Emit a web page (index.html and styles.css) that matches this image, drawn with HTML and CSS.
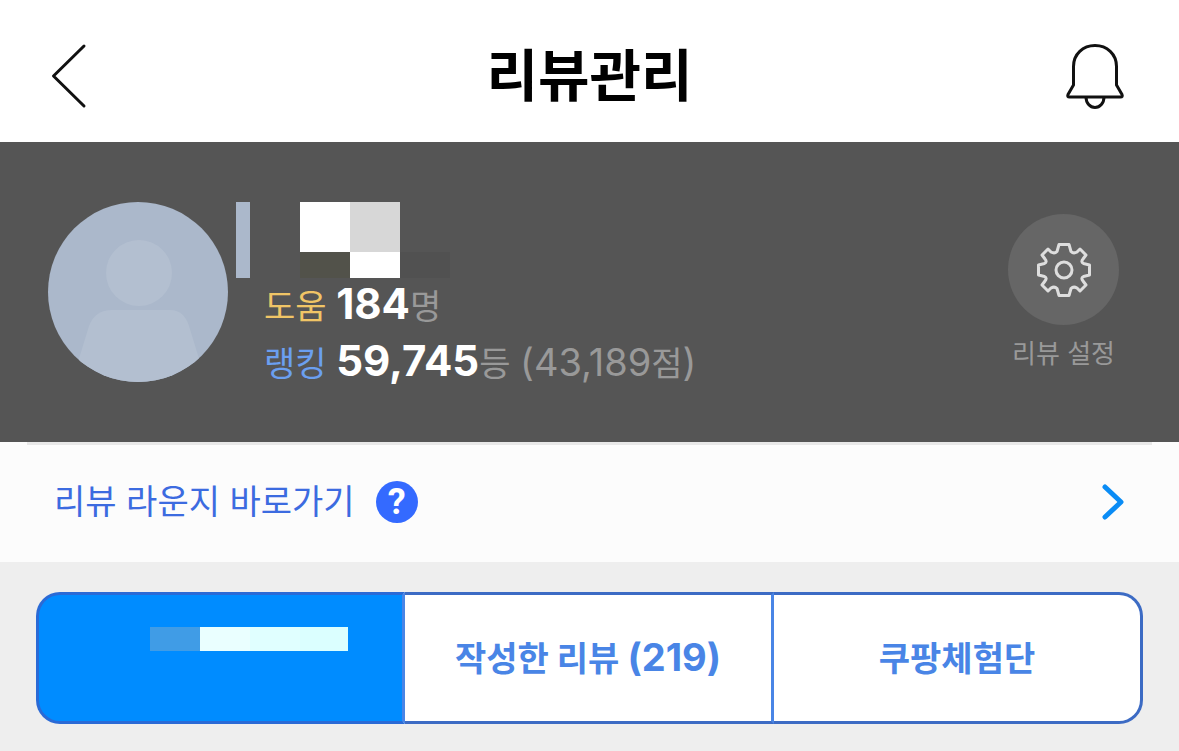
FILE: index.html
```html
<!DOCTYPE html>
<html lang="ko">
<head>
  <meta charset="UTF-8">
  <title>리뷰관리</title>
  <meta name="viewport" content="width=device-width, initial-scale=1.0">
  <link rel="stylesheet" href="styles.css">
</head>

<body>
  <!-- Top bar -->
  <header class="topbar">
    <a href="#back" class="icon-link" aria-label="뒤로">
      <svg width="64" height="68" viewBox="2 0 64 68" fill="none" stroke="#111" stroke-width="3" stroke-linecap="round" stroke-linejoin="round">
        <path d="M36 4 L5.500 34 L36 64"/>
      </svg>
    </a>
    <h1>리뷰관리</h1>
    <a href="#alerts" class="icon-link" aria-label="알림">
      <svg width="64" height="68" viewBox="0 0 64 68" fill="none" stroke="#111" stroke-width="3" stroke-linejoin="round">
        <path d="M8.500 43 V24.500 C8.500 12 18 3.500 30 3.500 S51.500 12 51.500 24.500 V43 L57 52.500 Q58 55 55.500 55 H4.500 Q2 55 3 52.500 Z"/>
        <path d="M21 55 C21 61 25 65.500 30 65.500 S39 61 39 55"/>
      </svg>
    </a>
  </header>

  <!-- Profile -->
  <section class="profile">
    <svg class="avatar" width="180" height="180" viewBox="0 0 180 180">
      <clipPath id="round"><circle cx="90" cy="90" r="90"/></clipPath>
      <g clip-path="url(#round)">
        <rect width="180" height="180" fill="#abb8cb"/>
        <circle cx="91" cy="71" r="33" fill="#b3bfd0"/>
        <path d="M30 160 L41 124 Q47 108 64 108 H122 Q136 108 141 124 L152 160 V180 H30 Z" fill="#b3bfd0"/>
      </g>
    </svg>
    <div class="info">
      <svg class="name" width="214" height="76" viewBox="0 0 214 76" shape-rendering="crispEdges">
        <rect width="14" height="76" fill="#abb8cb"/>
        <rect x="64" width="50" height="50" fill="#fff"/>
        <rect x="114" width="50" height="50" fill="#d7d7d7"/>
        <rect x="64" y="50" width="50" height="26" fill="#52524a"/>
        <rect x="114" y="50" width="50" height="26" fill="#fff"/>
        <rect x="164" y="50" width="50" height="26" fill="#515151"/>
      </svg>
      <p class="stat"><span class="help">도움</span> <strong>184</strong><span>명</span></p>
      <p class="stat"><span class="rank">랭킹</span> <strong>59,745</strong><span>등 <span class="points">(43,189</span>점<span class="points">)</span></span></p>
    </div>
    <a href="#settings" class="settings">
      <span class="gear">
        <svg width="56" height="56" viewBox="-28 -28 56 56" fill="none" stroke="#dedede" stroke-width="3" stroke-linejoin="round">
          <path d="M-5 -25.500 H5 L7 -18.500 Q9.500 -16 13 -18 L16 -21 L22 -15 L19 -11 Q16.500 -8 19.500 -6.500 L25.500 -5 V5 L19.500 6.500 Q16.500 8 19 11 L22 15 L16 21 L13 18 Q9.500 16 7 18.500 L5 25.500 H-5 L-7 18.500 Q-9.500 16 -13 18 L-16 21 L-22 15 L-19 11 Q-16.500 8 -19.500 6.500 L-25.500 5 V-5 L-19.500 -6.500 Q-16.500 -8 -19 -11 L-22 -15 L-16 -21 L-13 -18 Q-9.500 -16 -7 -18.500 Z"/>
          <circle r="8"/>
        </svg>
      </span>
      리뷰 설정
    </a>
  </section>

  <!-- Review lounge link -->
  <section class="lounge">
    <hr>
    <div class="lounge-row">
      <a href="#lounge">리뷰 라운지 바로가기</a>
      <button type="button" class="question" aria-label="도움말">?</button>
      <a href="#lounge" class="more" aria-label="바로가기">
        <svg width="24" height="38" viewBox="0 0 24 38" fill="none" stroke="#0a8cf5" stroke-width="5" stroke-linecap="round" stroke-linejoin="round">
          <path d="M4 4 L20 19 L4 34"/>
        </svg>
      </a>
    </div>
  </section>

  <!-- Tabs -->
  <nav class="tabs">
    <button type="button" class="tab active" aria-label="리뷰 작성">
      <svg width="198" height="24" viewBox="0 0 198 24" shape-rendering="crispEdges">
        <rect width="50" height="24" fill="#409ce6"/>
        <rect x="50" width="50" height="24" fill="#eaffff"/>
        <rect x="100" width="50" height="24" fill="#e0ffff"/>
        <rect x="150" width="48" height="24" fill="#dbffff"/>
      </svg>
    </button>
    <button type="button" class="tab">작성한 리뷰 <span class="count">(219)</span></button>
    <button type="button" class="tab">쿠팡체험단</button>
  </nav>
</body>
</html>
```
FILE: styles.css
```css
* {
  box-sizing: border-box;
}

body {
  margin: 0;
  min-height: 100vh;
  background: #eee;
  font-family: Inter, "Noto Sans CJK KR", sans-serif;
  font-size: 34px;
}

a {
  color: inherit;
  text-decoration: none;
}

button {
  font-family: inherit;
  padding: 0;
}

svg {
  display: block;
}

/* Top bar */
.topbar {
  display: flex;
  align-items: center;
  justify-content: space-between;
  height: 142px;
  padding: 10px 50px 0;
  background: #fff;
}

h1 {
  margin: 0;
  color: #000;
  font-size: 56px;
  font-weight: 700;
  line-height: 80px;
}

/* Profile */
.profile {
  display: flex;
  align-items: flex-start;
  height: 300px;
  padding: 60px 60px 0 48px;
  background: #555;
}

.info {
  flex: 1;
  margin-left: 8px;
}

.stat {
  margin: 0;
  padding-left: 28px;
  color: #999;
  font-weight: 400;
  line-height: 57px;
}

.stat strong {
  color: #fff;
  font-size: 42px;
  font-weight: 700;
  line-height: 1;
}

.help {
  color: #f0c566;
}

.rank {
  color: #6b9ff0;
}

.points {
  font-size: 38px;
  line-height: 1;
}

.settings {
  display: flex;
  flex-direction: column;
  align-items: center;
  gap: 9px;
  margin-top: 12px;
  color: #999;
  font-size: 26px;
  font-weight: 400;
  line-height: 40px;
}

.gear {
  display: flex;
  align-items: center;
  justify-content: center;
  width: 111px;
  height: 111px;
  border-radius: 50%;
  background: #666;
}

/* Review lounge */
.lounge {
  padding-bottom: 4px;
  background: #fcfcfc;
}

.lounge hr {
  height: 3px;
  margin: 0 27px;
  border: 0;
  background: #e8e8e8;
}

.lounge-row {
  display: flex;
  align-items: center;
  height: 113px;
  padding: 0 54px;
  color: #3c6be0;
  font-weight: 400;
  line-height: 40px;
}

.question {
  width: 42px;
  height: 42px;
  margin-left: 21px;
  border: 0;
  border-radius: 50%;
  background: #346aff;
  color: #fff;
  font-family: Roboto, sans-serif;
  font-size: 36px;
  font-weight: 700;
  line-height: 42px;
}

.more {
  margin-left: auto;
}

/* Tabs */
.tabs {
  display: grid;
  grid-template-columns: repeat(3, 1fr);
  padding: 30px 36px 27px;
}

.tab {
  height: 132px;
  padding-bottom: 4px;
  border: solid #3c6bc4;
  border-width: 3px 3px 3px 0;
  border-right-color: #4985e6;
  background: #fff;
  color: #4985e6;
  font-size: 34px;
  font-weight: 700;
}

.count {
  font-size: 38px;
  line-height: 1;
}

.tab.active {
  display: flex;
  justify-content: flex-end;
  padding: 32px 54px 0 0;
  border-width: 3px;
  border-color: #2a6ad6 #4985e6 #2a6ad6 #2a6ad6;
  border-radius: 24px 0 0 24px;
  background: #008cff;
}

.tab:last-child {
  border-right-color: #3c6bc4;
  border-radius: 0 24px 24px 0;
}
```
